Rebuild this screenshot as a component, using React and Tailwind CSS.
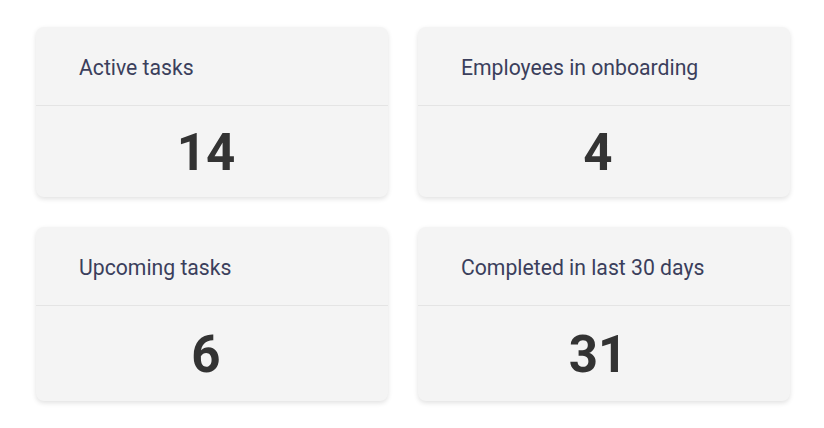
import React from "react";

const stats = [
  { label: "Active tasks", value: 14, w: "w-[352px]", body: "h-[91px]" },
  { label: "Employees in onboarding", value: 4, w: "w-[372px]", body: "h-[91px]" },
  { label: "Upcoming tasks", value: 6, w: "w-[352px]", body: "h-[95px]" },
  { label: "Completed in last 30 days", value: 31, w: "w-[372px]", body: "h-[95px]" },
];

// Single stat card
const StatCard = ({ label, value, w, body }) => (
  <div className={`${w} bg-[#f4f4f4] rounded-lg shadow-[0_2px_5px_rgba(0,0,0,0.12)] overflow-hidden`}>
    <div className="h-[79px] flex items-center pl-[43px] pt-[3px] border-b border-[#e4e4e4]">
      <span className="text-[21.2px] text-[#3b3f5c]">{label}</span>
    </div>
    <div className={`${body} flex items-center justify-center pr-3 pt-[2px]`}>
      <span className="text-[51px] font-bold text-[#333333] leading-none">{value}</span>
    </div>
  </div>
);

export default function App() {
  return (
    <div className="w-[824px] h-[428px] bg-white pt-[27px] pl-[36px]" style={{ fontFamily: "Roboto, 'Liberation Sans', sans-serif" }}>
      <div className="grid grid-cols-[352px_372px] gap-x-[30px] gap-y-[30px]">
        {stats.map((s) => (
          <StatCard key={s.label} {...s} />
        ))}
      </div>
    </div>
  );
}
